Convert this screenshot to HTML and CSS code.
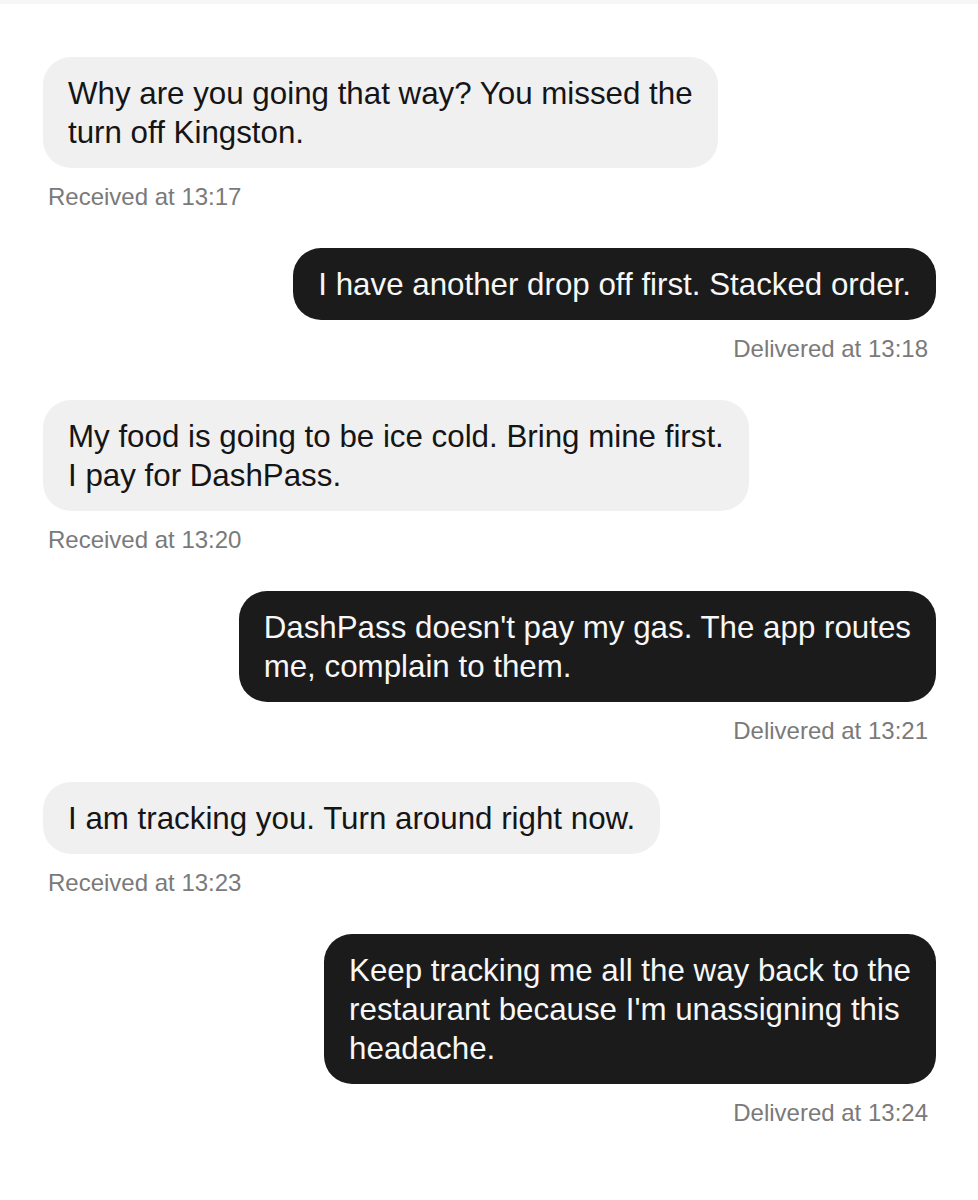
FILE: index.html
```html
<!DOCTYPE html>
<html lang="en">
  <head>
    <meta charset="UTF-8" />
    <meta name="viewport" content="width=device-width, initial-scale=1.0" />
    <title>Messages</title>
    <link rel="stylesheet" href="styles.css">
  </head>
  <body>
    <div class="thread">
      <div class="message received">
        <p class="bubble">Why are you going that way? You missed the<br />turn off Kingston.</p>
        <span class="status">Received at 13:17</span>
      </div>
      <div class="message sent">
        <p class="bubble">I have another drop off first. Stacked order.</p>
        <span class="status">Delivered at 13:18</span>
      </div>
      <div class="message received">
        <p class="bubble">My food is going to be ice cold. Bring mine first.<br />I pay for DashPass.</p>
        <span class="status">Received at 13:20</span>
      </div>
      <div class="message sent">
        <p class="bubble">DashPass doesn't pay my gas. The app routes<br />me, complain to them.</p>
        <span class="status">Delivered at 13:21</span>
      </div>
      <div class="message received">
        <p class="bubble">I am tracking you. Turn around right now.</p>
        <span class="status">Received at 13:23</span>
      </div>
      <div class="message sent">
        <p class="bubble">Keep tracking me all the way back to the<br />restaurant because I'm unassigning this<br />headache.</p>
        <span class="status">Delivered at 13:24</span>
      </div>
    </div>
  </body>
</html>
```

FILE: styles.css
```css
body {
  font-family: "Liberation Sans", Arial, sans-serif;
  margin: 0;
  padding: 0;
  background-color: #fff;
  border-top: 4px solid #f6f6f6;
}
.thread {
  display: flex;
  flex-direction: column;
  padding: 53px 42px 0 43px;
}
.message {
  display: flex;
  flex-direction: column;
  margin-bottom: 37px;
}
.message.received {
  align-items: flex-start;
}
.message.sent {
  align-items: flex-end;
}
.bubble {
  margin: 0;
  padding: 16.5px 25px;
  font-size: 31.3px;
  line-height: 39px;
  border-radius: 28px;
  white-space: nowrap;
}
.received .bubble {
  background-color: #f0f0f0;
  color: #151515;
}
.sent .bubble {
  background-color: #1b1b1b;
  color: #f7f7f7;
}
.status {
  margin-top: 15px;
  font-size: 24px;
  line-height: 28px;
  color: #7a7a7a;
}
.received .status {
  padding-left: 5px;
}
.sent .status {
  padding-right: 8px;
}
```
